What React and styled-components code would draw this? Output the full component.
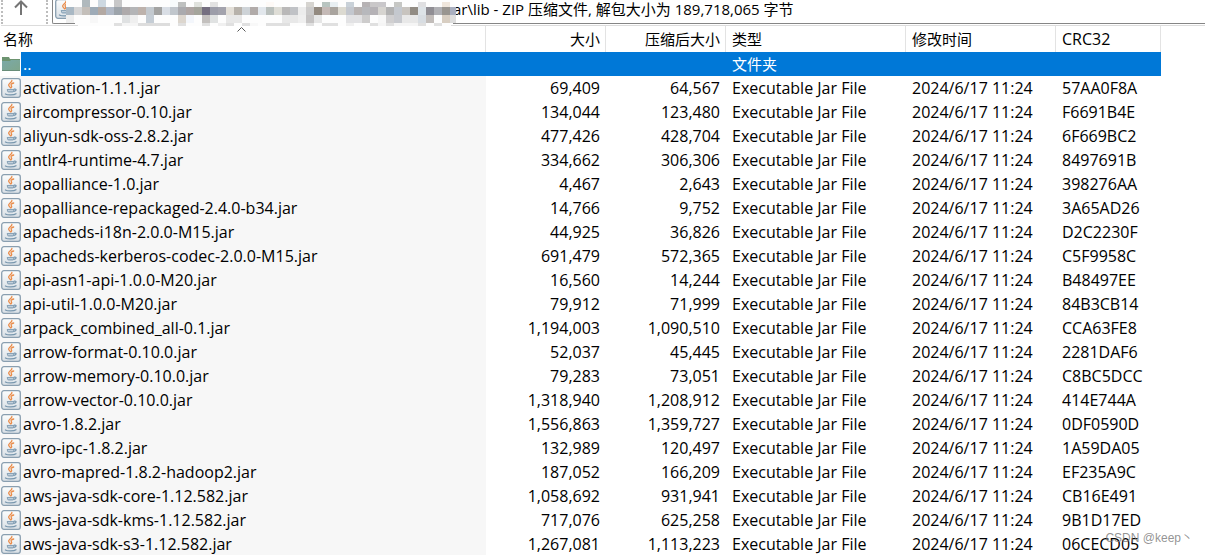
import { useState } from "react";
import styled, { createGlobalStyle } from "styled-components";

const TYPE = "Executable Jar File";
const MODIFIED = "2024/6/17 11:24";

const files = [
    ["activation-1.1.1.jar", "69,409", "64,567", "57AA0F8A"],
    ["aircompressor-0.10.jar", "134,044", "123,480", "F6691B4E"],
    ["aliyun-sdk-oss-2.8.2.jar", "477,426", "428,704", "6F669BC2"],
    ["antlr4-runtime-4.7.jar", "334,662", "306,306", "8497691B"],
    ["aopalliance-1.0.jar", "4,467", "2,643", "398276AA"],
    ["aopalliance-repackaged-2.4.0-b34.jar", "14,766", "9,752", "3A65AD26"],
    ["apacheds-i18n-2.0.0-M15.jar", "44,925", "36,826", "D2C2230F"],
    ["apacheds-kerberos-codec-2.0.0-M15.jar", "691,479", "572,365", "C5F9958C"],
    ["api-asn1-api-1.0.0-M20.jar", "16,560", "14,244", "B48497EE"],
    ["api-util-1.0.0-M20.jar", "79,912", "71,999", "84B3CB14"],
    ["arpack_combined_all-0.1.jar", "1,194,003", "1,090,510", "CCA63FE8"],
    ["arrow-format-0.10.0.jar", "52,037", "45,445", "2281DAF6"],
    ["arrow-memory-0.10.0.jar", "79,283", "73,051", "C8BC5DCC"],
    ["arrow-vector-0.10.0.jar", "1,318,940", "1,208,912", "414E744A"],
    ["avro-1.8.2.jar", "1,556,863", "1,359,727", "0DF0590D"],
    ["avro-ipc-1.8.2.jar", "132,989", "120,497", "1A59DA05"],
    ["avro-mapred-1.8.2-hadoop2.jar", "187,052", "166,209", "EF235A9C"],
    ["aws-java-sdk-core-1.12.582.jar", "1,058,692", "931,941", "CB16E491"],
    ["aws-java-sdk-kms-1.12.582.jar", "717,076", "625,258", "9B1D17ED"],
    ["aws-java-sdk-s3-1.12.582.jar", "1,267,081", "1,113,223", "06CECD05"],
];

// one string per band, cells separated by spaces, "-" leaves the cell empty
const mosaicBands = [
    { y: 0, h: 7, cells: "- - b0b9bd - cdd8e1 - c7c7c8 - - - - - - f7fbfc - - - - - - - - - - - - - - - - - - - - - - - - - - - - - - - - - - -" },
    { y: 2, h: 5, cells: "- - - - - - - - - - - - - - bec0bf - e0e2dd - e2e2e2 - - - - - - fdf9f6 - - - - d6d4d0 - b8c4c0 e8eff2 - c9d1d8 - b6b2b4 c9c7c8 c9c7ca - c6c7c4 - - dfdfe1 - - efe6dc -" },
    { y: 7, h: 8, cells: "a9b8c4 d5d5d6 c4bfba 9eabb7 b3a9a3 b1b9c6 9da4ab aeaaab b4b5b7 bdb2ac c3c9cf a3a3a2 d9dee5 c0c6cc aaaaae aea5a3 a5a59c 756f80 9c9da9 a3a3ad e3dfd8 b7b2ab ced3d7 b1aba9 e2e7ec bac0bd deddd6 b9b8b8 c0c2c6 ececec cbcaca 938a80 c4b9b6 a9a49e dcdad1 c3c7ce b8b3b2 b7b8bc b5b2b6 d6d4d0 b2b2b2 c4c8ce c8c4bf 928c84 dde3e7 908e94 b0b0b4 999590 a9afc0" },
    { y: 15, h: 8, cells: "eeeeee - - f7f7f7 - - - dfe1e2 efefef - c5cdd5 - - - dcd6ce f3f6fb - c3c0be e0e2e2 - e8e8e8 e8e8e8 - - - - - e8e8e8 e8e8e8 efefef c6c4c4 e6e6e6 - - - e2e2e4 e2e2e4 cdcccc - f7f7f7 d0cfd0 c7c9ce e8e8e8 e8e8e8 d8dde2 c2bdba - d8cec2 dddddd" },
    { y: 23, h: 3, cells: "- - - - - - e0e0e0 f5f5f5 f5f5f5 dddddd dddddd dddddd dddddd - e0e0e0 - - e0e0e0 - f0f0f0 e0e0e0 - e0e0e0 f8f8f8 - e0e0e0 e0e0e0 e0e0e0 - - e0e0e0 - e0e0e0 e0e0e0 - f0f0f0 - - e0e0e0 f5f5f5 e0e0e0 f5f5f5 f5f5f5 f5f5f5 e0e0e0 - e0e0e0 - -" },
];

function JavaIcon() {
    return (
        <Icon viewBox="0 0 20 20" aria-hidden="true">
            <defs>
                <linearGradient id="tile" x1="0" y1="0" x2="0" y2="1">
                    <stop offset="0" stopColor="#fcfdfd" />
                    <stop offset="1" stopColor="#d9e0e6" />
                </linearGradient>
            </defs>
            <rect x="0.7" y="0.7" width="18.6" height="18.6" rx="2.2" fill="url(#tile)" stroke="#8a9fb0" strokeWidth="1.3" />
            <path d="M10.900 2.300c.4 2-4.200 3-3.200 5.300.4.900 1.400 1.300 1.700 2.300M12.700 5c-2.500.600-3.200 1.500-2.300 2.600.6.800.3 1.500-.300 2.100" fill="none" stroke="#ea8c4a" strokeWidth="1.300" strokeLinecap="round" />
            <path d="M5.800 10.900h7.400c.200 1.800-.5 3.400-1.700 3.700H7.700c-1.200-.4-2-1.900-1.900-3.700z" fill="#8aa4b8" />
            <path d="M7 12.700h5.200" stroke="#dfe7ed" strokeWidth=".8" />
            <path d="M13.200 11.200c2.700-.5 2.500 1.700-.3 2.200M4.400 16c2 1.300 8.600 1.300 10.600-.3" fill="none" stroke="#7896ad" strokeWidth="1.200" strokeLinecap="round" />
        </Icon>
    );
}

function FolderIcon() {
    return (
        <Icon viewBox="0 0 20 20" aria-hidden="true">
            <defs>
                <linearGradient id="folder" x1="0" y1="0" x2="1" y2="1">
                    <stop offset="0" stopColor="#7aa9a8" />
                    <stop offset="1" stopColor="#7fa68b" />
                </linearGradient>
            </defs>
            <path d="M1 3h7l1 2h10v4H1z" fill="#6d9470" />
            <path d="M1 7h8l1-1h9v11H1z" fill="url(#folder)" />
            <path d="M1 16.500h18" stroke="#688c78" />
        </Icon>
    );
}

function Mosaic() {
    return (
        <MosaicSvg viewBox="0 0 403 26" shapeRendering="crispEdges" aria-hidden="true">
            <path d="M13 0h386q4 3 4 10v5q0 8-6 11H26Q16 20 13 15z" fill="#fdfdfd" />
            {mosaicBands.map((band) =>
                band.cells.split(" ").map((color, i) =>
                    color === "-" ? null : (
                        <rect key={band.y + "-" + i} x={13 + i * 8} y={band.y} width="8" height={band.h} fill={"#" + color} />
                    )
                )
            )}
        </MosaicSvg>
    );
}

export default function App() {
    const [selected, setSelected] = useState("..");

    return (
        <Page>
            <GlobalStyle />
            <Toolbar>
                <UpButton type="button" aria-label="向上" onClick={() => setSelected("..")}>
                    <svg width="16" height="16" viewBox="0 0 16 16" fill="none" stroke="#757575" strokeWidth="2">
                        <path d="M8 15V2M2 7.500L8 1.500L14 7.500" />
                    </svg>
                </UpButton>
                <Address>
                    <JavaIcon />
                    <AddressInput
                        aria-label="路径"
                        readOnly
                        value="ar\lib - ZIP 压缩文件, 解包大小为 189,718,065 字节"
                    />
                    <Mosaic />
                </Address>
            </Toolbar>

            <Table>
                <colgroup>
                    <Col $width={486} />
                    <Col $width={120} />
                    <Col $width={120} />
                    <Col $width={180} />
                    <Col $width={150} />
                    <Col $width={105} />
                    <col />
                </colgroup>
                <thead>
                    <tr>
                        <Heading $first aria-sort="ascending">
                            名称
                            <SortMark width="9" height="5" viewBox="0 0 9 5" aria-hidden="true">
                                <path d="M.5 4.500l4-4l4 4" fill="none" stroke="#555" />
                            </SortMark>
                        </Heading>
                        <Heading $right>大小</Heading>
                        <Heading $right>压缩后大小</Heading>
                        <Heading>类型</Heading>
                        <Heading>修改时间</Heading>
                        <Heading $latin>CRC32</Heading>
                        <td />
                    </tr>
                </thead>
                <tbody>
                    <Row $selected={selected === ".."} onClick={() => setSelected("..")}>
                        <NameCell>
                            <Name>
                                <FolderIcon />
                                <Label>..</Label>
                            </Name>
                        </NameCell>
                        <Cell />
                        <Cell />
                        <Cell $cjk>文件夹</Cell>
                        <Cell />
                        <Cell />
                        <td />
                    </Row>
                    {files.map(([name, size, packed, crc]) => (
                        <Row key={name} $selected={selected === name} onClick={() => setSelected(name)}>
                            <NameCell>
                                <Name>
                                    <JavaIcon />
                                    <Label>{name}</Label>
                                </Name>
                            </NameCell>
                            <Cell $right>{size}</Cell>
                            <Cell $right>{packed}</Cell>
                            <Cell>{TYPE}</Cell>
                            <Cell>{MODIFIED}</Cell>
                            <Cell>{crc}</Cell>
                            <td />
                        </Row>
                    ))}
                </tbody>
            </Table>
            <Watermark>CSDN @keep丶</Watermark>
        </Page>
    );
}

const GlobalStyle = createGlobalStyle`
    * {
        box-sizing: border-box;
    }

    body {
        margin: 0;
        background: #ffffff;
        color: #000000;
        font-family: 'Open Sans', 'Noto Sans CJK SC', sans-serif;
        font-size: 15px;
    }
`;

const Page = styled.div`
    position: relative;
    height: 100vh;
    overflow: hidden;
`;

const Toolbar = styled.div`
    display: flex;
    height: 26px;
    margin-left: 1px;
    padding-bottom: 1px;
    border-bottom: 1px solid #dcdcdc;
`;

const UpButton = styled.button`
    width: 47px;
    padding: 0 8px 8px 0;
    display: flex;
    align-items: center;
    justify-content: center;
    background: none;
    border: 0 dotted #bdbdbd;
    border-width: 0 2px;
`;

const Address = styled.div`
    position: relative;
    flex: 1;
    display: flex;
    align-items: center;
    margin-left: 4px;
    padding: 0 0 6px 2px;
    border: solid #858585;
    border-width: 0 0 1px 1px;
    border-bottom-left-radius: 2px;
`;

const AddressInput = styled.input`
    flex: 1;
    min-width: 0;
    height: 20px;
    padding: 0 0 0 378px;
    border: none;
    outline: none;
    background: none;
    font: inherit;
`;

const MosaicSvg = styled.svg`
    position: absolute;
    left: 0;
    top: 0;
    width: 403px;
    height: 26px;
    pointer-events: none;
`;

const Icon = styled.svg`
    flex: none;
    width: 20px;
    height: 20px;
`;

const Table = styled.table`
    width: 100%;
    table-layout: fixed;
    border-collapse: separate;
    border-spacing: 0;
`;

const Col = styled.col`
    width: ${(props) => props.$width}px;
`;

const Heading = styled.th`
    position: relative;
    height: 26px;
    padding: 0 ${(props) => (props.$right ? 5 : 6)}px 0 ${(props) => (props.$first ? 3 : 6)}px;
    border-right: 1px solid #e3e3e3;
    font-size: ${(props) => (props.$latin ? 16 : 15)}px;
    font-weight: 400;
    line-height: 24px;
    text-align: ${(props) => (props.$right ? "right" : "left")};
`;

const SortMark = styled.svg`
    position: absolute;
    top: 1px;
    left: 50%;
    margin-left: -6px;
`;

const Cell = styled.td`
    height: 24px;
    padding: 0 6px;
    font-size: ${(props) => (props.$cjk ? 15 : 16)}px;
    line-height: 24px;
    white-space: nowrap;
    text-align: ${(props) => (props.$right ? "right" : "left")};
`;

const NameCell = styled(Cell)`
    padding: 0 0 0 1px;
    background: #f7f7f7;
`;

const Name = styled.div`
    display: flex;
    align-items: center;
    height: 24px;
`;

const Label = styled.span`
    flex: 1;
    padding-left: 2px;
`;

const Row = styled.tr`
    ${Cell}, ${Label} {
        background: ${(props) => (props.$selected ? "#0078d7" : "")};
        color: ${(props) => (props.$selected ? "#ffffff" : "#000000")};
    }

    ${NameCell} {
        background: ${(props) => (props.$selected ? "#ffffff" : "#f7f7f7")};
    }
`;

const Watermark = styled.div`
    position: absolute;
    right: 12px;
    bottom: 8px;
    color: rgba(120, 120, 120, 0.8);
    font-family: 'Liberation Sans', 'Noto Sans CJK SC', sans-serif;
    font-size: 12px;
    line-height: 18px;
`;
